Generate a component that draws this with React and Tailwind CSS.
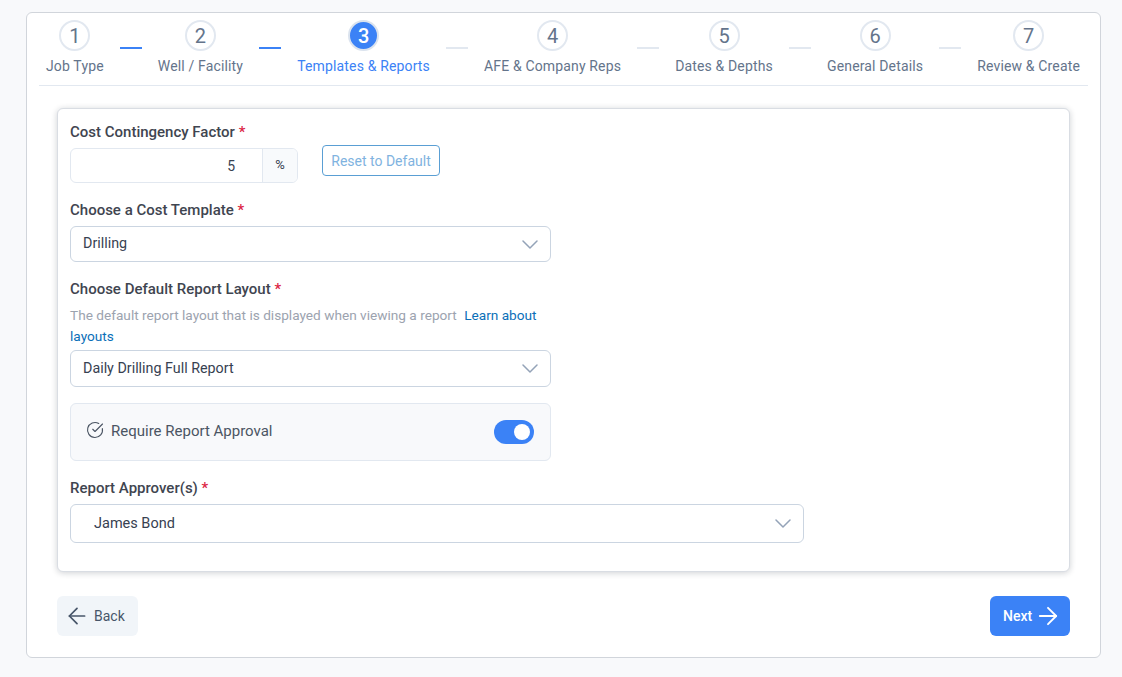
import { Fragment } from "react";
import { ArrowLeft, ArrowRight, CircleCheckBig } from "lucide-react";

const steps = ["Job Type", "Well / Facility", "Templates & Reports", "AFE & Company Reps", "Dates & Depths", "General Details", "Review & Create"];

function Chevron() {
  return (
    <svg width="16" height="9" viewBox="0 0 16 9" fill="none" className="flex-shrink-0">
      <path d="M1 1l7 7 7-7" stroke="#94a3b8" strokeWidth="1.5" strokeLinecap="round" strokeLinejoin="round"/>
    </svg>
  );
}

function Label({ children }) {
  return (
    <p className="text-[15px] leading-[20px] font-medium text-[#3f4550]">
      {children} <span className="text-[#dc2645]">*</span>
    </p>
  );
}

function Select({ value, className }) {
  return (
    <div className={`flex items-center justify-between border border-[#cbd5e1] rounded-md bg-white text-[#374151] ${className}`}>
      <span>{value}</span>
      <Chevron/>
    </div>
  );
}

function Stepper() {
  return (
    <div className="flex pl-[7px] pr-2 h-[73px] border-b border-[#e2e8f0]">
      {steps.map((step, i) => (
        <Fragment key={step}>
          <div className="flex flex-col items-center pt-[7px]">
            <div className={`w-[31px] h-[31px] rounded-full border-2 flex items-center justify-center text-[20px] leading-none ${i === 2 ? "bg-[#3b82f6] border-[#dbe3ee] text-white font-medium" : "bg-white border-[#e2e8f0] text-[#64748b]"}`}>
              {i + 1}
            </div>
            <span className={`mt-[5px] text-sm leading-[20px] tracking-[0.15px] whitespace-nowrap ${i === 2 ? "text-[#3b82f6]" : "text-[#64748b]"}`}>{step}</span>
          </div>
          {i < steps.length - 1 && (
            <div className="flex-1 mt-[34px] mx-4">
              <div className={`h-[2px] ${i < 2 ? "bg-[#3b82f6]" : "bg-[#e2e8f0]"}`}></div>
            </div>
          )}
        </Fragment>
      ))}
    </div>
  );
}

export default function App() {
  return (
    <div className="min-h-screen bg-[#f8f9fb] pt-3 pl-[26px] pr-[21px] font-['Roboto',sans-serif]">
      <div className="h-[646px] bg-white border border-[#d1d5db] rounded-md px-3 flex flex-col">
        <Stepper/>

        <div className="mt-[22px] mx-[18px] h-[464px] bg-white border border-[#d9dde3] rounded-md shadow-[0_1px_6px_rgba(15,23,42,0.2)] px-3 pt-[13px]">
          <Label>Cost Contingency Factor</Label>
          <div className="flex items-start mt-[6px]">
            <div className="flex w-[228px] h-[35px] border border-[#e2e8f0] rounded-md overflow-hidden text-sm">
              <div className="flex-1 flex items-center justify-end pr-[27px] text-[#374151]">5</div>
              <div className="w-[35px] flex items-center justify-center bg-[#f8fafc] border-l border-[#e2e8f0] text-[13px] text-[#374151]">%</div>
            </div>
            <button className="ml-6 -mt-[3px] w-[118px] h-[31px] border border-[#5a9fd4] rounded text-sm text-[#7fb3e0]">Reset to Default</button>
          </div>

          <div className="mt-[17px]"><Label>Choose a Cost Template</Label></div>
          <Select value="Drilling" className="mt-[6px] w-[481px] h-[36px] pl-3 pr-3 text-[14.3px]"/>

          <div className="mt-[17px]"><Label>Choose Default Report Layout</Label></div>
          <p className="mt-[6px] w-[481px] text-[13.65px] leading-[21px] text-[#9ca3af]">
            The default report layout that is displayed when viewing a report{" "}
            <a className="ml-1 text-[#0b6fb8]">Learn about</a>{" "}
            <a className="text-[#0b6fb8]">layouts</a>
          </p>
          <Select value="Daily Drilling Full Report" className="mt-[3px] w-[481px] h-[37px] pl-3 pr-3 text-[14.3px]"/>

          <div className="mt-4 w-[481px] h-[58px] flex items-center justify-between bg-[#f8f9fb] border border-[#e2e8f0] rounded-md pl-[15px] pr-4">
            <div className="flex items-center gap-[7px] -mt-[2px] text-[15px] text-[#4b5563]">
              <CircleCheckBig size={18} strokeWidth={1.5} className="-mt-[2px]"/>
              <span>Require Report Approval</span>
            </div>
            <div className="w-[40px] h-[24px] rounded-full bg-[#3b82f6] flex items-center justify-end pr-[4px]">
              <div className="w-4 h-4 rounded-full bg-white"></div>
            </div>
          </div>

          <div className="mt-[17px]"><Label>Report Approver(s)</Label></div>
          <Select value="James Bond" className="mt-[6px] w-[734px] h-[39px] pl-[23px] pr-3 text-[14.5px]"/>
        </div>

        <div className="mt-6 mx-[18px] flex justify-between">
          <button className="w-[81px] h-[40px] rounded-md bg-[#f1f5f9] flex items-center pl-[7px] gap-[4px] text-sm text-[#475569]">
            <ArrowLeft size={26} strokeWidth={1.6}/>
            Back
          </button>
          <button className="w-[80px] h-[40px] rounded-md bg-[#3b82f6] flex items-center pl-[13px] gap-[2px] text-sm font-medium text-white">
            Next
            <ArrowRight size={28} strokeWidth={1.6}/>
          </button>
        </div>
      </div>
    </div>
  );
}
